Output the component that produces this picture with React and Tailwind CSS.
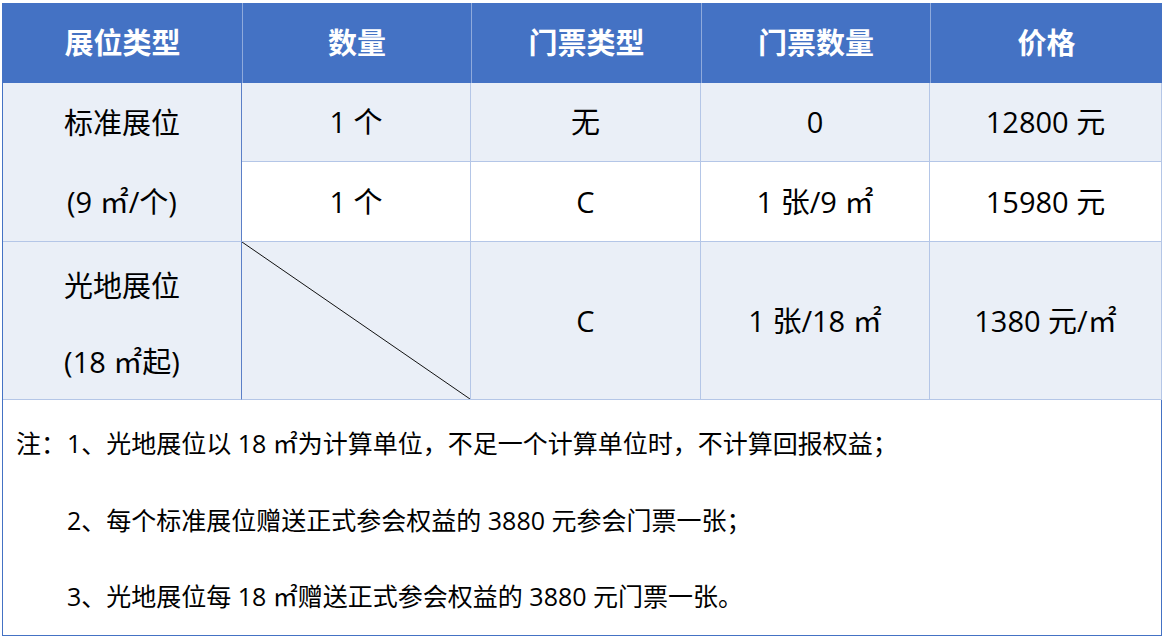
const FONT = { fontFamily: '"Open Sans", "Noto Sans CJK SC", sans-serif' };

const rowBg = "bg-[#EAEFF7]";
const line = "border-[#B4C6E7]";

function Cell({ className = "", children }) {
  return (
    <div className={`flex items-center justify-center border-r border-b ${line} ${className}`}>
      {children}
    </div>
  );
}

export default function App() {
  const headers = ["展位类型", "数量", "门票类型", "门票数量", "价格"];
  const notes = [
    "1、光地展位以 18 ㎡为计算单位，不足一个计算单位时，不计算回报权益；",
    "2、每个标准展位赠送正式参会权益的 3880 元参会门票一张；",
    "3、光地展位每 18 ㎡赠送正式参会权益的 3880 元门票一张。",
  ];

  return (
    <div className="w-[1164px] h-[639px] bg-white pt-[3px] pl-[2px]" style={FONT}>
      <div className="w-[1160px] grid grid-cols-[239px_229px_230px_229px_232px] grid-rows-[80px_79px_80px_158px_236px] border-l border-[#4472C4] text-[29px] text-black">
        {headers.map((h, i) => (
          <div
            key={h}
            className={`flex items-center justify-center bg-[#4472C4] font-bold text-white ${
              i === 0 ? "" : "border-l border-[#8FAADC]"
            }`}
          >
            {h}
          </div>
        ))}

        <div className={`row-span-2 flex flex-col border-r border-b border-r-[#5B7FC7] ${line} ${rowBg}`}>
          <div className="flex-1 flex items-center justify-center">标准展位</div>
          <div className="flex-1 flex items-center justify-center">(9 ㎡/个)</div>
        </div>
        <Cell className={rowBg}>1 个</Cell>
        <Cell className={rowBg}>无</Cell>
        <Cell className={rowBg}>0</Cell>
        <Cell className={rowBg}>12800 元</Cell>

        <Cell className="bg-white">1 个</Cell>
        <Cell className="bg-white">C</Cell>
        <Cell className="bg-white">1 张/9 ㎡</Cell>
        <Cell className="bg-white">15980 元</Cell>

        <div className={`flex flex-col border-r border-b border-r-[#5B7FC7] ${line} ${rowBg}`}>
          <div className="flex-1 flex items-center justify-center pt-[6px]">光地展位</div>
          <div className="flex-1 flex items-center justify-center">(18 ㎡起)</div>
        </div>
        <div className={`relative border-r border-b ${line} ${rowBg}`}>
          <svg className="absolute inset-0 w-full h-full" viewBox="0 0 100 100" preserveAspectRatio="none">
            <line x1="0" y1="0" x2="100" y2="100" stroke="#111" strokeWidth="1" vectorEffect="non-scaling-stroke" />
          </svg>
        </div>
        <Cell className={rowBg}>C</Cell>
        <Cell className={rowBg}>1 张/18 ㎡</Cell>
        <Cell className={rowBg}>1380 元/㎡</Cell>

        <div className="col-span-5 flex flex-col pt-[6px] pl-[13px] border-r border-b border-[#4472C4] bg-white text-[25px]">
          {notes.map((n, i) => (
            <div key={i} className="h-[77px] flex items-center">
              <span className="w-[51px] shrink-0">{i === 0 ? "注：" : ""}</span>
              <span>{n}</span>
            </div>
          ))}
        </div>
      </div>
    </div>
  );
}
